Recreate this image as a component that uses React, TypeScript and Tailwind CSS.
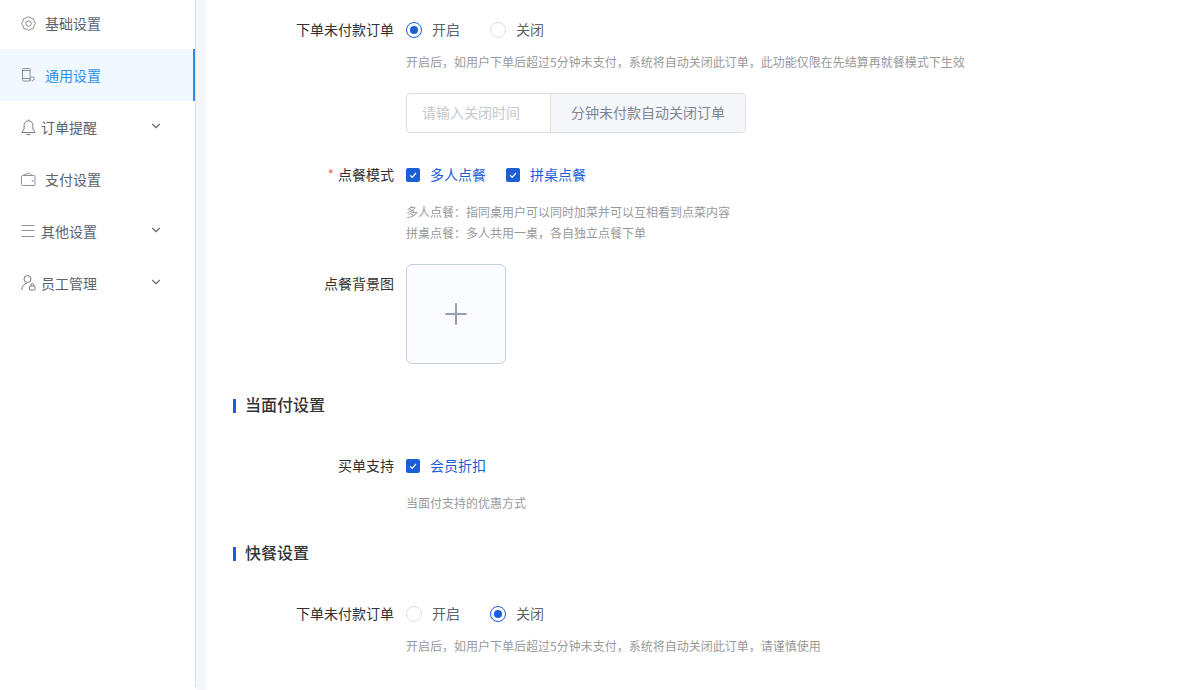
import React from 'react';
import { ChevronDown, Plus } from 'lucide-react';

const GearIcon = () => (
  <svg width="15" height="15" viewBox="0 0 16 16" fill="none" stroke="#80858f" strokeWidth="1">
    <path d="M14 5.500A3.500 3.500 0 0 1 14 10.500A3.500 3.500 0 0 1 10.500 14A3.500 3.500 0 0 1 5.500 14A3.500 3.500 0 0 1 2 10.500A3.500 3.500 0 0 1 2 5.500A3.500 3.500 0 0 1 5.500 2A3.500 3.500 0 0 1 10.500 2A3.500 3.500 0 0 1 14 5.500z" />
    <circle cx="8" cy="8" r="2.900" />
  </svg>
);

const PhoneIcon = () => (
  <svg width="13" height="14" viewBox="0 0 13 14" className="ml-[1px]" fill="none" stroke="#8a8f99" strokeWidth="1">
    <rect x="0.500" y="0.500" width="7.500" height="12.500" rx="1.200" />
    <path d="M.5 10.500h7.500M.5 2.500h7.500" />
    <circle cx="10.200" cy="10.800" r="2" strokeDasharray="1.300 .6" strokeWidth="1.300" />
  </svg>
);

const BellIcon = () => (
  <svg width="15" height="17" viewBox="0 0 15 17" fill="none" stroke="#777c86" strokeWidth="1">
    <path d="M7.500 1.800c-2.700 0-4.400 2-4.400 4.600v3.600L.9 13.500h13.200l-2.200-3.500V6.400c0-2.600-1.700-4.600-4.400-4.600z" strokeLinejoin="round" />
    <path d="M7.500 .5v1.300M5.400 15.500h4.200" />
  </svg>
);

const WalletIcon = () => (
  <svg width="15" height="14" viewBox="0 0 15 14" fill="none" stroke="#8a8f99" strokeWidth="1">
    <rect x="0.500" y="3.500" width="13.500" height="10" rx="1" />
    <path d="M2 3.500L8 .7l3 2.800" />
    <path d="M10.800 8.700h1.500" strokeWidth="1.500" />
  </svg>
);

const ListIcon = () => (
  <svg width="14" height="14" viewBox="0 0 14 14" fill="none" stroke="#8f939b" strokeWidth="1">
    <path d="M.5 1.500h13M.5 6.500h13M.5 12.500h13" />
  </svg>
);

const UserIcon = () => (
  <svg width="15" height="16" viewBox="0 0 15 16" fill="none" stroke="#777c86" strokeWidth="1">
    <circle cx="6.500" cy="4" r="3.500" />
    <path d="M.7 15c.2-3.500 2.500-6.500 5.300-7" />
    <rect x="8.500" y="11" width="5.500" height="4" rx=".5" />
    <path d="M10 11V9.800a1.300 1.300 0 0 1 2.600 0V11" />
  </svg>
);

const menus = [
  { label: '基础设置', icon: <GearIcon />, textGap: 'ml-[9px]' },
  { label: '通用设置', icon: <PhoneIcon />, active: true, textGap: 'ml-[9px]' },
  { label: '订单提醒', icon: <BellIcon />, arrow: true, textGap: 'ml-[5px]' },
  { label: '支付设置', icon: <WalletIcon />, textGap: 'ml-[9px]' },
  { label: '其他设置', icon: <ListIcon />, arrow: true, textGap: 'ml-[5px]' },
  { label: '员工管理', icon: <UserIcon />, arrow: true, textGap: 'ml-[5px]' },
];

const Sidebar = () => (
  <aside className="w-[196px] shrink-0 h-full border-r border-[#dfe1e6] bg-white -mt-[3px]">
    {menus.map((m) => (
      <div
        key={m.label}
        className={`h-[52px] flex items-center pl-[21px] text-[14px] ${
          m.active ? 'bg-[#f0f9ff] text-[#2f8ff0] border-r-2 border-[#2d8cf0]' : 'text-[#5d6270]'
        }`}
      >
        <span className="w-[15px] flex justify-start">{m.icon}</span>
        <span className={m.textGap}>{m.label}</span>
        {m.arrow && <ChevronDown size={14} color="#666b76" className="ml-auto mr-[32px] -mt-[2px]" />}
      </div>
    ))}
  </aside>
);

const Radio = ({ label, on, className = '' }: { label: string; on?: boolean; className?: string }) => (
  <div className={`flex items-center ${className}`}>
    <span
      className={`w-4 h-4 rounded-full border flex items-center justify-center bg-white ${
        on ? 'border-[#1a5fd6]' : 'border-[#dcdee2]'
      }`}
    >
      {on && <span className="w-2 h-2 rounded-full bg-[#1a5fd6]" />}
    </span>
    <span className="ml-[10px] pb-[2px] text-[14px] text-[#606266]">{label}</span>
  </div>
);

const Check = ({ label, className = '' }: { label: string; className?: string }) => (
  <div className={`flex items-center ${className}`}>
    <span className="w-[14px] h-[14px] rounded-[2px] bg-[#1a5fd6] flex items-center justify-center">
      <svg width="10" height="10" viewBox="0 0 10 10" fill="none" stroke="#fff" strokeWidth="1.200">
        <path d="M2 5.200l2.200 2.200L8 3" />
      </svg>
    </span>
    <span className="ml-[10px] pb-[2px] text-[14px] text-[#1a5fd6]">{label}</span>
  </div>
);

const Row = ({ label, star, className = '', children }: { label: string; star?: boolean; className?: string; children: React.ReactNode }) => (
  <div className={`flex items-center h-5 ${className}`}>
    <label className="w-[173px] shrink-0 text-right pr-3 pb-[2px] text-[14px] text-[#303133]">
      {star && <span className="text-[#f56c6c] mr-[4px]">*</span>}
      {label}
    </label>
    {children}
  </div>
);

const Hint = ({ children, className = '' }: { children: React.ReactNode; className?: string }) => (
  <p className={`ml-[173px] text-[12px] leading-[21px] text-[#999999] ${className}`}>{children}</p>
);

const Section = ({ title, className = '' }: { title: string; className?: string }) => (
  <div className={`flex items-center h-6 ${className}`}>
    <span className="w-[3px] h-[14px] bg-[#1a5fd6] translate-y-px" />
    <h3 className="ml-[9px] pb-[2px] text-[16px] font-medium text-[#333333]">{title}</h3>
  </div>
);

export default function App() {
  return (
    <div
      className="w-[1182px] h-[690px] overflow-hidden flex bg-white"
      style={{ fontFamily: '"Noto Sans CJK SC", "Noto Sans", sans-serif' }}
    >
      <Sidebar />
      <div className="w-[10px] shrink-0 bg-[#f5f6f9]" />
      <main className="flex-1 pl-[27px] pt-[20px]">
        <Row label="下单未付款订单">
          <Radio label="开启" on />
          <Radio label="关闭" className="ml-[30px]" />
        </Row>
        <Hint className="mt-[11px]">开启后，如用户下单后超过5分钟未支付，系统将自动关闭此订单，此功能仅限在先结算再就餐模式下生效</Hint>

        <div className="ml-[173px] mt-[21px] w-[340px] h-10 flex border border-[#dcdee2] rounded-[4px] text-[14px] overflow-hidden">
          <div className="w-[143px] pl-[15px] pb-[2px] flex items-center text-[#c5c8ce]">请输入关闭时间</div>
          <div className="flex-1 flex items-center justify-center pb-[2px] bg-[#f5f6fa] border-l border-[#dcdee2] text-[#808695]">
            分钟未付款自动关闭订单
          </div>
        </div>

        <Row label="点餐模式" star className="mt-[32px]">
          <Check label="多人点餐" />
          <Check label="拼桌点餐" className="ml-[20px]" />
        </Row>
        <Hint className="mt-[16px]">
          多人点餐：指同桌用户可以同时加菜并可以互相看到点菜内容
          <br />
          拼桌点餐：多人共用一桌，各自独立点餐下单
        </Hint>

        <div className="flex mt-[21px]">
          <label className="w-[173px] shrink-0 text-right pr-3 text-[14px] text-[#303133] leading-5 pt-[9px]">点餐背景图</label>
          <div className="w-[100px] h-[100px] rounded-[6px] border border-[#c6d0de] bg-[#f9fbff] flex items-center justify-center">
            <Plus size={34} strokeWidth={1.400} color="#97a0ad" />
          </div>
        </div>

        <Section title="当面付设置" className="mt-[29px]" />
        <Row label="买单支持" className="mt-[39px]">
          <Check label="会员折扣" />
        </Row>
        <Hint className="mt-[16px]">当面付支持的优惠方式</Hint>

        <Section title="快餐设置" className="mt-[28px]" />
        <Row label="下单未付款订单" className="mt-[39px]">
          <Radio label="开启" />
          <Radio label="关闭" on className="ml-[30px]" />
        </Row>
        <Hint className="mt-[11px]">开启后，如用户下单后超过5分钟未支付，系统将自动关闭此订单，请谨慎使用</Hint>
      </main>
    </div>
  );
}
